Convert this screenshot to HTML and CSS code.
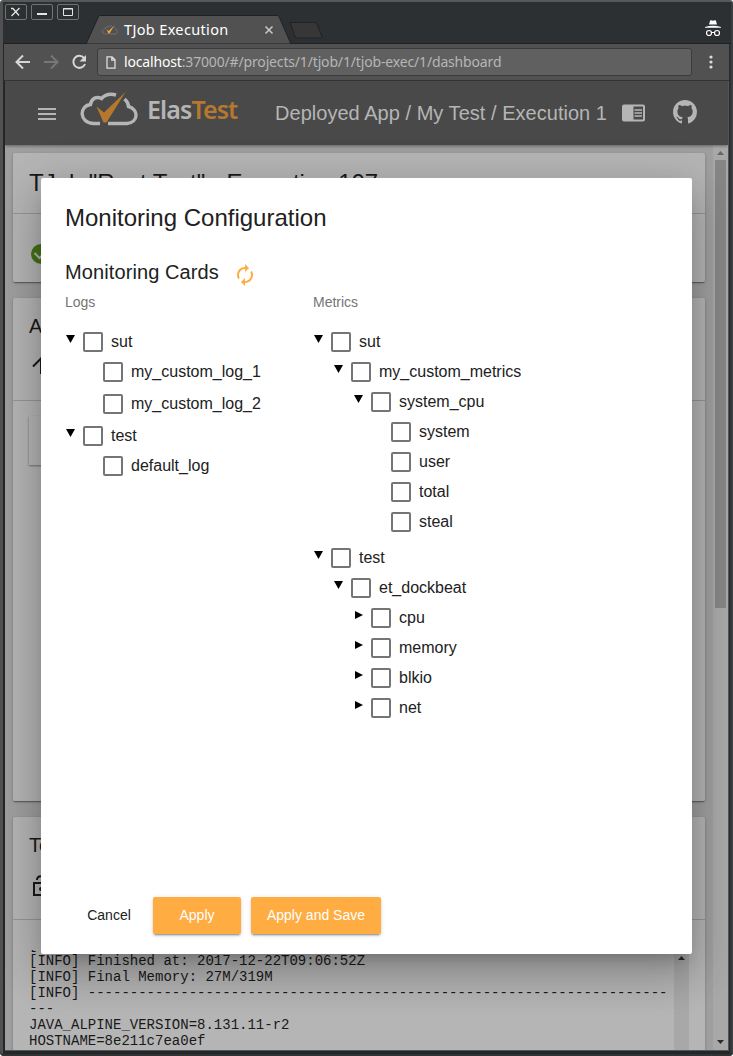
FILE: index.html
```html
<!DOCTYPE html>
<html lang="en">
<head>
<meta charset="utf-8">
<title>TJob Execution</title>
<link rel="stylesheet" href="styles.css">
</head>
<body>
<svg class="defs" width="0" height="0">
  <defs>
    <symbol id="cloud" viewBox="0 0 58 34">
      <path d="M20 31.500H13C-1 30.500-1 14 10.500 12.500C11.500 6 17 4 21.500 6.500C26 1.500 31 1.500 36 3M44.500 7C48 10 48.500 11.500 48.500 14.500C59 17.500 58.500 30.500 47 31.500H28" fill="none" stroke="currentColor" stroke-width="3.400"/>
      <path d="M16.500 14.500L24 20.500L45.500 0L26.500 30.500H23.500Z" fill="var(--tick)"/>
    </symbol>
  </defs>
</svg>
<div class="window">
  <header class="titlebar">
    <div class="controls">
      <span class="ctl"><svg width="20" height="14" viewBox="0 0 20 14"><path d="M5 3.500h2l6 7M13.500 3l-8 8" fill="none" stroke="#e4e4e4" stroke-width="1.300"/></svg></span>
      <span class="ctl"><svg width="20" height="14" viewBox="0 0 20 14"><path d="M5 9h10" stroke="#e4e4e4" stroke-width="2"/></svg></span>
      <span class="ctl"><svg width="20" height="14" viewBox="0 0 20 14"><path d="M5.500 3.500h9v7h-9z M5 4h10" fill="none" stroke="#e4e4e4"/></svg></span>
    </div>
    <div class="tab">
      <svg class="tab-shape" width="206" height="29" viewBox="0 0 206 29"><path d="M0 29L12.500 1.500Q13 .500 14 .500H191Q192.500 .500 193 1.500L205 29Z" fill="#515151" stroke="#1f2122"/></svg>
      <svg class="tab-icon" width="16" height="10"><use href="#cloud"/></svg>
      <span class="tab-title">TJob Execution</span>
      <svg class="tab-close" width="10" height="10" viewBox="0 0 10 10"><path d="M1.500 1.500l7 7M8.500 1.500l-7 7" stroke="#c8c8c8" stroke-width="1.500"/></svg>
    </div>
    <svg class="new-tab" width="34" height="17" viewBox="0 0 34 17"><path d="M1 .500H25.500Q27 .500 28 2L33 14.500Q33.500 16 32 16H9Q7 16 6 14.500Z" fill="#373737" stroke="#222"/></svg>
    <svg class="incognito" width="18" height="17" viewBox="0 0 18 17"><path d="M6 1q0-1 1-.800l2 .500 2-.500q1-.200 1 .800l1 3.500H5z M1 7Q9 4.500 17 7v.800H1z" fill="#fff"/><circle cx="5" cy="13" r="2.500" fill="none" stroke="#fff" stroke-width="1.200"/><circle cx="13" cy="13" r="2.500" fill="none" stroke="#fff" stroke-width="1.200"/><path d="M7.500 13q1.500-1.500 3 0" fill="none" stroke="#fff"/></svg>
  </header>
  <nav class="toolbar">
    <svg class="nav-icon" width="16" height="16" viewBox="0 0 16 16"><path d="M15 8H2M8 1.500L1.500 8L8 14.500" fill="none" stroke="#d6d6d6" stroke-width="2"/></svg>
    <svg class="nav-icon" width="16" height="16" viewBox="0 0 16 16"><path d="M1 8H14M8 1.500L14.500 8L8 14.500" fill="none" stroke="#777" stroke-width="2"/></svg>
    <svg class="nav-icon" width="16" height="16" viewBox="0 0 16 16"><path d="M13 4A6 6 0 1 0 14 10" fill="none" stroke="#d6d6d6" stroke-width="2"/><path d="M15 1v6.500H8.500z" fill="#d6d6d6"/></svg>
    <div class="address">
      <svg width="10" height="13" viewBox="0 0 10 13"><path d="M1 .800h5l3 3v8.400H1z M5.800 1v3.200H9" fill="none" stroke="#ddd" stroke-width="1.300"/></svg>
      <span class="url"><b>localhost</b>:37000/#/projects/1/tjob/1/tjob-exec/1/dashboard</span>
    </div>
    <svg class="menu-dots" width="4" height="14" viewBox="0 0 4 14"><g fill="#ddd"><circle cx="2" cy="2" r="1.600"/><circle cx="2" cy="7" r="1.600"/><circle cx="2" cy="12" r="1.600"/></g></svg>
  </nav>
  <div class="viewport">
    <header class="appbar">
      <svg class="burger" width="18" height="12" viewBox="0 0 18 12"><path d="M0 1h18M0 6h18M0 11h18" stroke="#b5b5b5" stroke-width="2"/></svg>
      <svg class="logo" width="58" height="34"><use href="#cloud"/></svg>
      <span class="brand">Elas<em>Test</em></span>
      <span class="crumbs">Deployed App / My Test / Execution 1</span>
      <svg class="reader" width="23" height="18" viewBox="0 0 23 18"><path fill="#b5b5b5" fill-rule="evenodd" d="M2 .500h19a2 2 0 0 1 2 2v13a2 2 0 0 1-2 2H2a2 2 0 0 1-2-2v-13a2 2 0 0 1 2-2z M11.500 2.500v13H21v-13z"/><path d="M12.500 6h7.500M12.500 9h7.500M12.500 12h7.500" stroke="#b5b5b5" stroke-width="1.500"/></svg>
      <svg class="github" width="24" height="24" viewBox="0 0 16 16"><path fill="#b5b5b5" d="M8 0C3.580 0 0 3.580 0 8c0 3.540 2.290 6.530 5.470 7.590.4.070.55-.17.55-.38 0-.19-.01-.82-.01-1.490-2.010.37-2.530-.49-2.690-.94-.09-.23-.48-.94-.82-1.130-.28-.15-.68-.52-.01-.53.63-.01 1.080.58 1.230.82.72 1.210 1.870.87 2.330.66.07-.52.28-.87.51-1.070-1.780-.2-3.640-.89-3.640-3.950 0-.87.31-1.590.82-2.150-.08-.2-.36-1.020.08-2.120 0 0 .67-.21 2.200.82.64-.18 1.320-.27 2-.27s1.360.09 2 .27c1.530-1.040 2.200-.82 2.200-.82.44 1.100.16 1.920.08 2.120.51.56.82 1.270.82 2.150 0 3.070-1.870 3.750-3.650 3.950.29.25.54.73.54 1.480 0 1.070-.01 1.930-.01 2.200 0 .21.15.46.55.38A8.010 8.010 0 0 0 16 8c0-4.420-3.580-8-8-8z"/></svg>
    </header>
    <div class="page">
      <main class="cards">
        <section class="card card-job">
          <h1>TJob "Rest Test" - Execution 107</h1>
          <div class="card-body"><svg width="20" height="20" viewBox="0 0 20 20"><circle cx="10" cy="10" r="10" fill="#447218"/><path d="M3.500 9l5 5 8-8" fill="none" stroke="#b5b5b5" stroke-width="2"/></svg></div>
        </section>
        <section class="card card-metrics">
          <div class="card-head"><h2>All Metrics</h2><svg width="18" height="18" viewBox="0 0 18 18"><path d="M1 9.500L9 1.500L17 9.500M9 2v15" fill="none" stroke="#191919" stroke-width="2"/></svg></div>
          <div class="metric-box"></div>
        </section>
        <section class="card card-logs">
          <div class="card-head"><h2>Test Logs</h2><svg width="16" height="21" viewBox="0 0 16 21"><path d="M1 8h14v12H1z M4 5c0-5 8-5 8 0v3" fill="none" stroke="#191919" stroke-width="2"/><circle cx="8" cy="14" r="2" fill="#191919"/></svg></div>
          <div class="console">
            <pre>[INFO] Total time: 01:02 min
[INFO] Finished at: 2017-12-22T09:06:52Z
[INFO] Final Memory: 27M/319M
[INFO] ---------------------------------------------------------------------
---
JAVA_ALPINE_VERSION=8.131.11-r2
HOSTNAME=8e211c7ea0ef</pre>
            <div class="console-scroll"><svg width="7" height="4" viewBox="0 0 7 4"><path d="M0 4L3.500 0L7 4z" fill="#2c2c2c"/></svg></div>
          </div>
        </section>
      </main>
      <aside class="scrollbar">
        <svg width="7" height="4" viewBox="0 0 7 4"><path d="M0 4L3.500 0L7 4z" fill="#666"/></svg>
        <div class="thumb"></div>
        <svg width="7" height="4" viewBox="0 0 7 4"><path d="M0 0L3.500 4L7 0z" fill="#2c2c2c"/></svg>
      </aside>
    </div>
    <div class="dialog">
      <h2 class="dialog-title">Monitoring Configuration</h2>
      <div class="sub"><h3>Monitoring Cards</h3>
        <svg width="24" height="24" viewBox="0 0 24 24"><path fill="#ffac42" d="M12 6v3l4-4-4-4v3c-4.420 0-8 3.580-8 8 0 1.570.46 3.030 1.240 4.260L6.700 14.800c-.45-.83-.7-1.790-.7-2.800 0-3.310 2.690-6 6-6zm6.760 1.740L17.300 9.200c.44.840.7 1.790.7 2.800 0 3.310-2.690 6-6 6v-3l-4 4 4 4v-3c4.420 0 8-3.580 8-8 0-1.570-.46-3.030-1.240-4.260z"/></svg>
      </div>
      <div class="columns">
        <div class="column">
          <p>Logs</p>
          <ul class="tree">
            <li><div class="node"><i class="down"></i><span class="box"></span>sut</div>
              <ul class="loose">
                <li><div class="node"><i></i><span class="box"></span>my_custom_log_1</div></li>
                <li><div class="node"><i></i><span class="box"></span>my_custom_log_2</div></li>
              </ul></li>
            <li><div class="node"><i class="down"></i><span class="box"></span>test</div>
              <ul><li><div class="node"><i></i><span class="box"></span>default_log</div></li></ul></li>
          </ul>
        </div>
        <div class="column">
          <p>Metrics</p>
          <ul class="tree spaced">
            <li><div class="node"><i class="down"></i><span class="box"></span>sut</div>
              <ul><li><div class="node"><i class="down"></i><span class="box"></span>my_custom_metrics</div>
                <ul><li><div class="node"><i class="down"></i><span class="box"></span>system_cpu</div>
                  <ul>
                    <li><div class="node"><i></i><span class="box"></span>system</div></li>
                    <li><div class="node"><i></i><span class="box"></span>user</div></li>
                    <li><div class="node"><i></i><span class="box"></span>total</div></li>
                    <li><div class="node"><i></i><span class="box"></span>steal</div></li>
                  </ul></li></ul></li></ul></li>
            <li><div class="node"><i class="down"></i><span class="box"></span>test</div>
              <ul><li><div class="node"><i class="down"></i><span class="box"></span>et_dockbeat</div>
                <ul>
                  <li><div class="node"><i class="right"></i><span class="box"></span>cpu</div></li>
                  <li><div class="node"><i class="right"></i><span class="box"></span>memory</div></li>
                  <li><div class="node"><i class="right"></i><span class="box"></span>blkio</div></li>
                  <li><div class="node"><i class="right"></i><span class="box"></span>net</div></li>
                </ul></li></ul></li>
          </ul>
        </div>
      </div>
      <div class="actions">
        <button class="btn flat">Cancel</button>
        <button class="btn apply">Apply</button>
        <button class="btn save">Apply and Save</button>
      </div>
    </div>
  </div>
</div>
</body>
</html>
```
FILE: styles.css
```css
* { box-sizing: border-box; }
body { margin: 0; font-family: "Liberation Sans", Arial, sans-serif; color: #212121; background: #fff; }
h1, h2, h3, p, ul, pre { margin: 0; padding: 0; font-weight: 400; }
ul { list-style: none; }
svg { display: block; flex: none; }
.defs { position: absolute; }

.window {
  width: 733px; height: 1056px; padding: 0 4px 5px 5px; border-top: 2px solid #585858;
  background: linear-gradient(90deg, #515151 0 3px, #242628 3px 5px, #242628 calc(100% - 4px), #3d4042 calc(100% - 1px));
  box-shadow: inset 0 -2px #303335; border-radius: 3px 3px 4px 4px;
  display: flex; flex-direction: column; overflow: hidden;
}
.titlebar { height: 42px; margin: 0 -2px 0 -2px; background: #2d3032; display: flex; align-items: flex-start; border-bottom: 1px solid #1f2122; flex: none; }
.controls { display: flex; gap: 4px; padding: 2px 0 0 2px; }
.ctl { width: 22px; height: 16px; border: 1px solid #707374; border-radius: 2px; }
.tab { display: flex; align-items: center; width: 206px; height: 29px; margin: 13px 0 0 7px; padding: 0 16px 0 16px; --tick: #f5a536; color: #737373; position: relative; }
.tab-shape { position: absolute; left: 0; top: 0; }
.tab-icon, .tab-title, .tab-close { position: relative; }
.tab-title { margin: -2px 0 0 6px; width: 140px; font: 14.5px "Noto Sans", sans-serif; letter-spacing: .35px; color: #fff; white-space: nowrap; }
.new-tab { margin: 20px 0 0 -3px; }
.incognito { margin: 18px 9px 0 auto; }

.toolbar { height: 37px; margin-left: -1px; background: #515151; border-bottom: 1px solid #333; display: flex; align-items: center; padding: 0 16px 0 11px; flex: none; }
.nav-icon { margin-right: 12px; }
.address { width: 595px; height: 28px; margin-left: -2px; border: 1px solid #3c3c3c; border-radius: 3px; background: #606060; display: flex; align-items: center; padding-left: 8px; }
.url { margin: -2px 0 0 8px; font: 14px "Noto Sans", sans-serif; letter-spacing: -.16px; color: #b6b6b6; white-space: nowrap; }
.url b { font-weight: 400; color: #fff; }
.menu-dots { margin-left: auto; }

.viewport { flex: 1; min-height: 0; position: relative; overflow: hidden; display: flex; flex-direction: column; border-right: 1px solid #555; border-bottom: 1px solid #555; }
.appbar { height: 64px; background: #494949; display: flex; align-items: center; padding: 0 31px 0 33px; color: #b5b5b5; box-shadow: 0 1px 3px rgba(0,0,0,.4); position: relative; flex: none; --tick: #b6782e; }
.burger { margin-top: 2px; }
.logo { margin: -9px 0 0 24px; }
.brand { margin: -9px 0 0 9px; width: 128px; font: 600 25px "Noto Sans", sans-serif; letter-spacing: -.9px; white-space: nowrap; }
.brand em { font-style: normal; color: #b6782e; }
.crumbs { font-size: 20px; letter-spacing: .03px; white-space: nowrap; }
.reader { margin-left: 15px; margin-top: -1px; }
.github { margin: -2px 0 0 auto; }

.page { flex: 1; min-height: 0; display: flex; background: #9f9f9f; }
.cards { flex: 1; min-width: 0; padding: 8px 8px 0; display: flex; flex-direction: column; gap: 16px; }
.card { background: #b5b5b5; border-radius: 2px; box-shadow: 0 2px 1px -1px rgba(0,0,0,.3), 0 1px 3px rgba(0,0,0,.25); color: #191919; flex: none; overflow: hidden; }
.card-job { height: 129px; }
.card-job h1 { height: 61px; padding: 16px; font-size: 24px; line-height: 28px; letter-spacing: -.03px; border-bottom: 1px solid #959595; }
.card-job .card-body { padding: 30px 18px; }
.card-metrics { height: 503px; }
.card-head { height: 103px; padding: 16px; border-bottom: 1px solid #959595; }
.card-head h2 { font-size: 20px; line-height: 24px; }
.card-head svg { margin: 20px 0 0 3px; }
.card-metrics .card-head svg { margin-top: 19px; margin-left: 3px; }
.metric-box { height: 49px; margin: 15px 16px; box-shadow: 0 1px 2px rgba(0,0,0,.4); }
.card-logs { height: 240px; }
.card-logs .card-head svg { margin-top: 18px; margin-left: 4px; }
.console { display: flex; justify-content: space-between; height: 120px; margin: 30px 16px 0; overflow: hidden; }
.console pre { margin-top: -13px; font: 14px/16px "Liberation Mono", monospace; }
.console-scroll { width: 15px; padding: 6px 4px; background: #a8a8a8; }
.scrollbar { width: 15px; background: #a8a8a8; display: flex; flex-direction: column; align-items: center; padding: 6px 0; }
.thumb { width: 11px; height: 448px; margin: 5px 0 auto; background: #868686; }

.dialog { position: absolute; left: 36px; top: 97px; width: 651px; height: 776px; padding: 24px; background: #fff; border-radius: 2px; display: flex; flex-direction: column;
  box-shadow: 0 11px 15px -7px rgba(0,0,0,.2), 0 24px 38px 3px rgba(0,0,0,.14), 0 9px 46px 8px rgba(0,0,0,.12); }
.dialog-title { font-size: 24px; line-height: 32px; }
.sub { display: flex; align-items: center; margin-top: 24px; height: 28px; }
.sub h3 { font-size: 20px; line-height: 28px; letter-spacing: .1px; }
.sub svg { margin: 6px 0 0 14px; }
.columns { display: grid; grid-template-columns: 248px 1fr; margin-top: 6px; }
.column p { font-size: 14px; line-height: 20px; color: #757575; }
.tree { padding-top: 14px; }
.tree ul { padding-left: 20px; }
.node { display: flex; align-items: center; height: 30px; padding-top: 2px; font-size: 16px; line-height: 18px; }
.box { width: 20px; height: 20px; border: 2px solid #757575; border-radius: 2px; margin-right: 8px; }
.node i { width: 18px; height: 20px; flex: none; }
.node i::before { content: ""; display: block; }
.down::before { width: 9px; height: 8px; margin: 3px 0 0 1px; background: #000; clip-path: polygon(0 0, 100% 0, 50% 100%); }
.right::before { width: 8px; height: 8px; margin: 3px 0 0 2px; background: #000; clip-path: polygon(0 0, 100% 50%, 0 100%); }
.loose li { height: 32px; }
.spaced > li + li { margin-top: 6px; }
.actions { display: flex; margin: auto 0 -4px; padding-left: 6px; }
.btn { height: 37px; border: 0; border-radius: 2px; padding: 0 0 2px; font: 14px "Liberation Sans", Arial, sans-serif; background: #ffac42; color: #fff; box-shadow: 0 3px 1px -2px rgba(0,0,0,.2), 0 2px 2px rgba(0,0,0,.14), 0 1px 5px rgba(0,0,0,.12); }
.flat { width: 76px; background: none; box-shadow: none; color: #212121; }
.apply { width: 88px; margin-left: 6px; }
.save { width: 130px; margin-left: 10px; }
```
